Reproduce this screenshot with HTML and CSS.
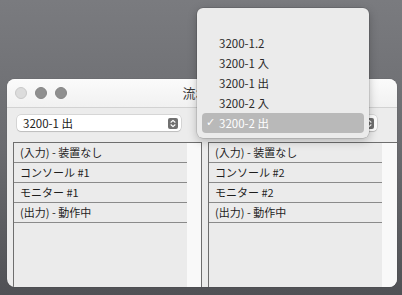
FILE: index.html
```html
<!DOCTYPE html>
<html lang="ja">
<head>
<meta charset="utf-8">
<link rel="stylesheet" href="styles.css">
</head>
<body>
<div class="desktop">
  <div class="window">
    <div class="titlebar">
      <div class="lights">
        <span class="light light-close"></span>
        <span class="light"></span>
        <span class="light"></span>
      </div>
      <div class="title">流れ図</div>
    </div>
    <div class="content">
      <div class="column">
        <div class="popup">
          <span class="popup-label">3200-1 出</span>
          <span class="popup-arrows"><svg width="10" height="11" viewBox="0 0 10 11"><path d="M3 4.2 L5 2.4 L7 4.2 M3 6.8 L5 8.6 L7 6.8" fill="none" stroke="#fff" stroke-width="1.2" stroke-linecap="round" stroke-linejoin="round"/></svg></span>
        </div>
        <div class="listbox">
          <div class="rows">
            <div class="row">(入力) - 装置なし</div>
            <div class="row">コンソール #1</div>
            <div class="row">モニター #1</div>
            <div class="row">(出力) - 動作中</div>
          </div>
          <div class="scroller"></div>
        </div>
      </div>
      <div class="column column-right">
        <div class="popup">
          <span class="popup-label">3200-2 出</span>
          <span class="popup-arrows"><svg width="10" height="11" viewBox="0 0 10 11"><path d="M3 4.2 L5 2.4 L7 4.2 M3 6.8 L5 8.6 L7 6.8" fill="none" stroke="#fff" stroke-width="1.2" stroke-linecap="round" stroke-linejoin="round"/></svg></span>
        </div>
        <div class="listbox">
          <div class="rows">
            <div class="row">(入力) - 装置なし</div>
            <div class="row">コンソール #2</div>
            <div class="row">モニター #2</div>
            <div class="row">(出力) - 動作中</div>
          </div>
          <div class="scroller"></div>
        </div>
      </div>
    </div>
  </div>

  <div class="menu">
    <div class="menu-item menu-empty"></div>
    <div class="menu-item">3200-1.2</div>
    <div class="menu-item">3200-1 入</div>
    <div class="menu-item">3200-1 出</div>
    <div class="menu-item">3200-2 入</div>
    <div class="menu-item menu-selected"><span class="check">✓</span>3200-2 出</div>
  </div>
</div>
</body>
</html>
```

FILE: styles.css
```css
html, body {
  margin: 0;
  padding: 0;
}

body {
  font-family: "Noto Sans CJK JP", "Liberation Sans", sans-serif;
  font-size: 11px;
  color: #222;
}

.desktop {
  position: relative;
  width: 402px;
  height: 295px;
  overflow: hidden;
  background: linear-gradient(180deg, #7a7b7f 0%, #6a6b6f 50%, #505155 100%);
}

.window {
  position: absolute;
  left: 7px;
  top: 79px;
  width: 390px;
  height: 208px;
  border-radius: 8px;
  overflow: hidden;
  background: #ececec;
  display: flex;
  flex-direction: column;
  box-shadow: 0 0 1px rgba(0, 0, 0, 0.4);
}

.titlebar {
  height: 28px;
  flex: none;
  background: linear-gradient(180deg, #fbfbfb, #f1f1f1);
  border-bottom: 1px solid #d2d2d2;
  position: relative;
  display: flex;
  align-items: center;
}

.lights {
  display: flex;
  gap: 8px;
  padding-left: 8px;
}

.light {
  width: 12px;
  height: 12px;
  border-radius: 50%;
  background: #8f8f8f;
  box-sizing: border-box;
  border: 1px solid #858585;
}

.light-close {
  background: #dcdcdc;
  border-color: #c8c8c8;
}

.title {
  position: absolute;
  left: 0;
  right: 0;
  top: 0;
  line-height: 28px;
  text-align: center;
  font-size: 13px;
  color: #3a3a3a;
}

.content {
  flex: 1;
  display: flex;
  gap: 6px;
  padding: 7px 0 0 6px;
  min-height: 0;
}

.column {
  width: 189px;
  flex: none;
  display: flex;
  flex-direction: column;
  gap: 11px;
}

.column-right {
  width: 196px;
}

.popup {
  margin-left: 4px;
  width: 164px;
  height: 16px;
  box-sizing: border-box;
  background: #fff;
  border-radius: 4px;
  box-shadow: 0 0 0 0.5px rgba(0, 0, 0, 0.18), 0 1px 1px rgba(0, 0, 0, 0.12);
  display: flex;
  align-items: center;
  justify-content: space-between;
  padding: 0 3px 0 6px;
  flex: none;
}

.column-right .popup {
  width: 165px;
}

.popup-label {
  line-height: 16px;
  font-size: 11.5px;
  color: #222;
}

.popup-arrows {
  width: 10px;
  height: 11px;
  border-radius: 2px;
  background: #707070;
  display: flex;
}

.listbox {
  flex: 1;
  display: flex;
  border-top: 1px solid #6e6e6e;
  border-left: 1px solid #6e6e6e;
  border-right: 1px solid #6e6e6e;
  min-height: 0;
}

.rows {
  width: 173px;
  flex: none;
  background: #ebebeb;
}

.row {
  height: 19px;
  line-height: 19px;
  border-bottom: 1px solid #8a8a8a;
  padding-left: 6px;
  font-size: 11px;
  color: #1e1e1e;
  white-space: nowrap;
}

.scroller {
  flex: 1;
  background: #f9f9f9;
}

.menu {
  position: absolute;
  left: 197px;
  top: 8px;
  width: 172px;
  height: 130px;
  box-sizing: border-box;
  padding: 5px;
  background: #ebebeb;
  border-radius: 6px;
  box-shadow: 0 0 0 0.5px rgba(0, 0, 0, 0.2), 0 3px 10px rgba(0, 0, 0, 0.25);
}

.menu-item {
  height: 20px;
  line-height: 20px;
  padding-left: 17px;
  border-radius: 4px;
  font-size: 11.5px;
  color: #2a2a2a;
  position: relative;
}

.menu-selected {
  background: #b9b9b9;
  color: #fff;
}

.check {
  position: absolute;
  left: 4px;
  top: 0;
  font-size: 11px;
  font-family: "DejaVu Sans", sans-serif;
}
```
